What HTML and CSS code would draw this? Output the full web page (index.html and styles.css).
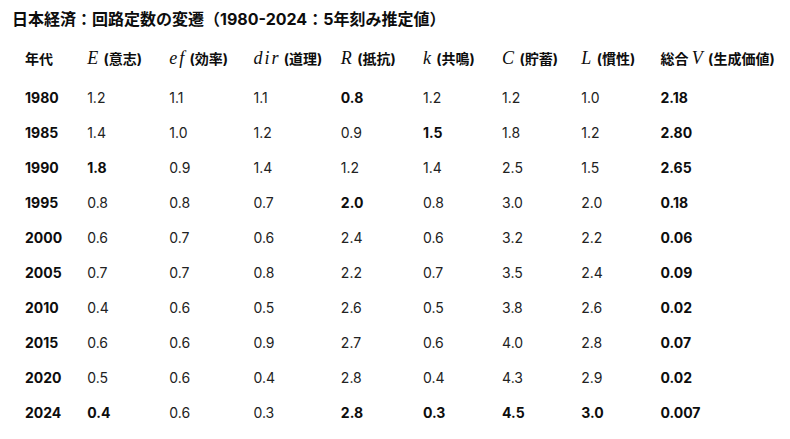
FILE: index.html
```html
<!DOCTYPE html>
<html lang="ja">
<head>
<meta charset="utf-8">
<link rel="stylesheet" href="styles.css">
</head>
<body>
<h3 class="title">日本経済：回路定数の変遷（1980-2024：5年刻み推定値）</h3>
<table class="data">
  <colgroup>
    <col class="c1"><col class="c2"><col class="c3"><col class="c4"><col class="c5"><col class="c6"><col class="c7"><col class="c8"><col class="c9">
  </colgroup>
  <thead>
    <tr>
      <th>年代</th>
      <th><span class="m">E</span> (意志)</th>
      <th><span class="m">ef</span> (効率)</th>
      <th><span class="m">dir</span> (道理)</th>
      <th><span class="m">R</span> (抵抗)</th>
      <th><span class="m">k</span> (共鳴)</th>
      <th><span class="m">C</span> (貯蓄)</th>
      <th><span class="m">L</span> (慣性)</th>
      <th>総合 <span class="m">V</span> (生成価値)</th>
    </tr>
  </thead>
  <tbody>
    <tr><td class="b">1980</td><td>1.2</td><td>1.1</td><td>1.1</td><td class="b">0.8</td><td>1.2</td><td>1.2</td><td>1.0</td><td class="b">2.18</td></tr>
    <tr><td class="b">1985</td><td>1.4</td><td>1.0</td><td>1.2</td><td>0.9</td><td class="b">1.5</td><td>1.8</td><td>1.2</td><td class="b">2.80</td></tr>
    <tr><td class="b">1990</td><td class="b">1.8</td><td>0.9</td><td>1.4</td><td>1.2</td><td>1.4</td><td>2.5</td><td>1.5</td><td class="b">2.65</td></tr>
    <tr><td class="b">1995</td><td>0.8</td><td>0.8</td><td>0.7</td><td class="b">2.0</td><td>0.8</td><td>3.0</td><td>2.0</td><td class="b">0.18</td></tr>
    <tr><td class="b">2000</td><td>0.6</td><td>0.7</td><td>0.6</td><td>2.4</td><td>0.6</td><td>3.2</td><td>2.2</td><td class="b">0.06</td></tr>
    <tr><td class="b">2005</td><td>0.7</td><td>0.7</td><td>0.8</td><td>2.2</td><td>0.7</td><td>3.5</td><td>2.4</td><td class="b">0.09</td></tr>
    <tr><td class="b">2010</td><td>0.4</td><td>0.6</td><td>0.5</td><td>2.6</td><td>0.5</td><td>3.8</td><td>2.6</td><td class="b">0.02</td></tr>
    <tr><td class="b">2015</td><td>0.6</td><td>0.6</td><td>0.9</td><td>2.7</td><td>0.6</td><td>4.0</td><td>2.8</td><td class="b">0.07</td></tr>
    <tr><td class="b">2020</td><td>0.5</td><td>0.6</td><td>0.4</td><td>2.8</td><td>0.4</td><td>4.3</td><td>2.9</td><td class="b">0.02</td></tr>
    <tr><td class="b">2024</td><td class="b">0.4</td><td>0.6</td><td>0.3</td><td class="b">2.8</td><td class="b">0.3</td><td class="b">4.5</td><td class="b">3.0</td><td class="b">0.007</td></tr>
  </tbody>
</table>
</body>
</html>
```
FILE: styles.css
```css
html, body {
  margin: 0;
  padding: 0;
  background: #ffffff;
}
body {
  font-family: Inter, "Noto Sans CJK JP", sans-serif;
  color: #0d0d0d;
}
.title {
  margin: 7px 0 5px 12px;
  font-size: 16px;
  line-height: 24px;
  font-weight: 700;
}
.data {
  margin-left: 25px;
  border-collapse: collapse;
  table-layout: fixed;
  font-size: 14px;
}
.c1 { width: 63px; }
.c2 { width: 83px; }
.c3 { width: 85px; }
.c4 { width: 88px; }
.c5 { width: 83px; }
.c6 { width: 80px; }
.c7 { width: 80px; }
.c8 { width: 80px; }
.c9 { width: 130px; }
.data th, .data td {
  padding: 0;
  text-align: left;
  white-space: nowrap;
  vertical-align: middle;
}
.data thead th {
  height: 44px;
  font-weight: 700;
  font-size: 14px;
}
.data tbody td {
  height: 35px;
  font-weight: 400;
  color: #222222;
}
.data tbody td.b {
  font-weight: 700;
  color: #0d0d0d;
}
.m {
  font-family: "Liberation Serif", "DejaVu Serif", serif;
  font-style: italic;
  font-weight: 400;
  font-size: 18px;
  letter-spacing: 2px;
}
```
